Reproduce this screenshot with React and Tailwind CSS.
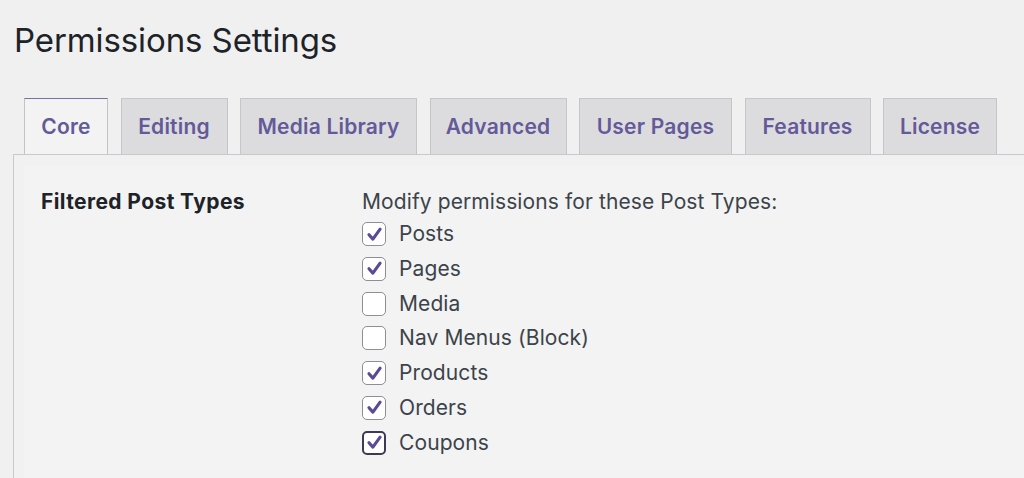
import React from "react";

const tabs = [
  { t: "Core", w: "w-[84px]" },
  { t: "Editing", w: "w-[107px]" },
  { t: "Media Library", w: "w-[177px]" },
  { t: "Advanced", w: "w-[137px]" },
  { t: "User Pages", w: "w-[153px]" },
  { t: "Features", w: "w-[126px]" },
  { t: "License", w: "w-[114px]" },
];
const items = [
  { label: "Posts", checked: true },
  { label: "Pages", checked: true },
  { label: "Media", checked: false },
  { label: "Nav Menus (Block)", checked: false },
  { label: "Products", checked: true },
  { label: "Orders", checked: true },
  { label: "Coupons", checked: true, focus: true },
];

function Check({ checked, focus }) {
  return (
    <span
      className={
        "flex h-[24px] w-[24px] shrink-0 items-center justify-center rounded-[5px] bg-white " +
        (focus ? "border-2 border-[#3e3a55]" : "border border-[#8c8f94]")
      }
    >
      {checked && (
        <svg width="19" height="19" viewBox="0 0 20 20">
          <path d="M4.2 10.3 L8.3 14.9 L15.9 4.4" fill="none" stroke="#5b4a96" strokeWidth="3.3" strokeLinecap="round" strokeLinejoin="round" />
        </svg>
      )}
    </span>
  );
}

export default function App() {
  return (
    <div className="min-h-[478px] overflow-hidden bg-[#f0f0f1] pl-[13px]" style={{ fontFamily: "Inter, 'Noto Sans', sans-serif" }}>
      <h1 className="pt-[20px] text-[33px] leading-[40px] font-normal text-[#1d2327] pl-[1px] tracking-[-0.1px]">Permissions Settings</h1>
      <div className="mt-[38px] flex gap-[12.5px] pl-[11px]">
        {tabs.map((tab, i) => (
          <div
            key={tab.t}
            className={
              "flex h-[56px] items-center justify-center border border-b-0 text-[21px] font-semibold tracking-[0.2px] text-[#645a99] " +
              tab.w +
              " " +
              (i === 0 ? "border-[#c3c4c7] border-t-[#7a6eab] bg-[#f3f3f3]" : "border-[#c6c6c9] bg-[#dcdcde]")
            }
          >
            {tab.t}
          </div>
        ))}
      </div>
      <div className="border-l border-t border-[#c9c9cc] bg-[#f1f1f1] pl-[10px] pt-[11px]">
        <div className="flex bg-[#f3f3f3] pl-[17px] pt-[22px] pb-[30px]">
          <div className="w-[321px] text-[21px] font-bold leading-[28px] tracking-[0.4px] text-[#1d2327]">Filtered Post Types</div>
          <div className="text-[21px] leading-[28px] tracking-[0.1px] text-[#3c434a]">
            <div>Modify permissions for these Post Types:</div>
            <div className="mt-[4px] flex flex-col gap-[6.8px]">
              {items.map((it) => (
                <label key={it.label} className="flex h-[28px] items-center gap-[13px]">
                  <Check checked={it.checked} focus={it.focus} />
                  <span>{it.label}</span>
                </label>
              ))}
            </div>
          </div>
        </div>
      </div>
    </div>
  );
}
